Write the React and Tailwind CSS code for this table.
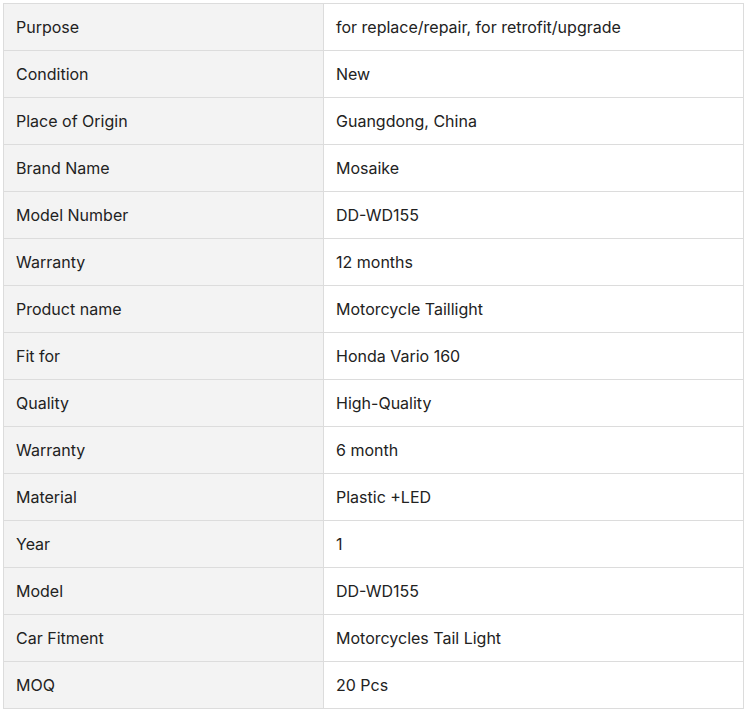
const rows = [
  ["Purpose", "for replace/repair, for retrofit/upgrade"],
  ["Condition", "New"],
  ["Place of Origin", "Guangdong, China"],
  ["Brand Name", "Mosaike"],
  ["Model Number", "DD-WD155"],
  ["Warranty", "12 months"],
  ["Product name", "Motorcycle Taillight"],
  ["Fit for", "Honda Vario 160"],
  ["Quality", "High-Quality"],
  ["Warranty", "6 month"],
  ["Material", "Plastic +LED"],
  ["Year", "1"],
  ["Model", "DD-WD155"],
  ["Car Fitment", "Motorcycles Tail Light"],
  ["MOQ", "20 Pcs"],
];

export default function App() {
  return (
    <div className="pt-[3px] pl-[3px] bg-white" style={{ fontFamily: "Inter, 'Noto Sans', sans-serif" }}>
      <table className="w-[741px] border-collapse text-[16px] text-[#222]">
        <tbody>
          {rows.map(([k, v], i) => (
            <tr key={i}>
              <td className="w-[320px] h-[47px] border border-[#dcdcdc] bg-[#f3f3f3] px-3 align-middle">{k}</td>
              <td className="h-[47px] border border-[#dcdcdc] bg-white px-3 align-middle">{v}</td>
            </tr>
          ))}
        </tbody>
      </table>
    </div>
  );
}
